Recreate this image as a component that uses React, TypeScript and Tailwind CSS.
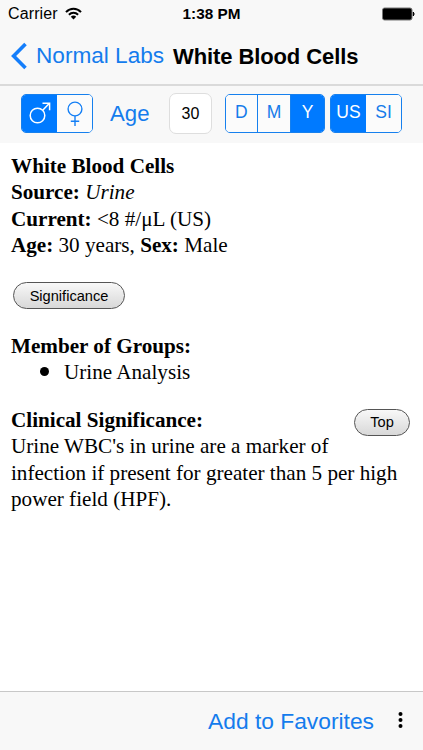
import type { ReactNode } from "react";

function StatusBar() {
  return (
    <div className="flex h-[28px] items-center px-2">
      <div className="flex flex-1 items-center gap-[7px]">
        <span className="text-[16px] leading-[28px] tracking-[0.12px]">Carrier</span>
        <svg className="-mt-px" width="17" height="13" viewBox="0 0 17 13" fill="none" stroke="black" strokeWidth="2">
          <path d="M1 5.1C5.2 .7 11.8 .7 16 5.1" />
          <path d="M3.9 7.8C6.5 5.2 10.5 5.2 13.1 7.8" />
          <path d="M5.8 9.7C7.4 8.2 9.6 8.2 11.2 9.7L8.5 12.4Z" fill="black" stroke="none" />
        </svg>
      </div>
      <span className="text-[15.3px] font-bold leading-[28px]">1:38 PM</span>
      <div className="flex flex-1 justify-end">
        <svg width="34" height="14" viewBox="0 0 34 14">
          <rect x="1.5" y="1" width="29.5" height="12" rx="2" fill="black" stroke="#777" />
          <path d="M32.3 5Q34 7 32.3 9Z" fill="black" stroke="black" />
        </svg>
      </div>
    </div>
  );
}

function Segment({ on = false, width, divider = false, children }: { on?: boolean; width: string; divider?: boolean; children: ReactNode }) {
  return (
    <div className={`flex h-full items-center justify-center ${width} ${on ? "bg-[#007aff] text-white" : "bg-[#fbfbfb] text-[#157bea]"} ${divider ? "border-r border-[#1680ee]" : ""}`}>
      {children}
    </div>
  );
}

function Segments({ className, children }: { className: string; children: ReactNode }) {
  return (
    <div className={`flex h-[39px] shrink-0 overflow-hidden rounded-[5px] border border-[#1680ee] text-[17.5px] leading-none ${className}`}>
      {children}
    </div>
  );
}

function Pill({ className, children }: { className: string; children: ReactNode }) {
  return (
    <button className={`h-[27px] rounded-full border-[1.4px] border-[#555] bg-linear-to-b from-[#f8f8f8] to-[#d8d8d8] font-['Liberation_Sans',sans-serif] text-[14.6px] leading-none ${className}`}>
      {children}
    </button>
  );
}

export default function App() {
  return (
    <div className="flex h-[750px] w-[423px] flex-col overflow-hidden bg-white font-['Liberation_Sans',Arial,sans-serif] text-black">
      <header className="h-[86px] shrink-0 border-b-2 border-[#dadada] bg-[#f8f8f8]">
        <StatusBar />
        <div className="flex h-[56px] items-center whitespace-nowrap pl-[11px]">
          <svg width="17" height="28" viewBox="0 0 17 28" fill="none" stroke="#147efb" strokeWidth="3.6">
            <path d="M14.5 2L2.6 14L14.5 26" />
          </svg>
          <span className="ml-2 w-[137px] text-[22.6px] text-[#147ced]">Normal Labs</span>
          <h1 className="text-[22px] font-bold tracking-[-0.1px]">White Blood Cells</h1>
        </div>
      </header>

      <div className="flex h-[57px] shrink-0 items-center bg-[#f8f8f8] pb-[2px] pl-[21px]">
        <Segments className="w-[72px]">
          <Segment on width="w-[35px]">
            <svg width="22" height="23" viewBox="0 0 22 23" fill="none" stroke="white" strokeWidth="1.5">
              <circle cx="8.5" cy="13.5" r="7.3" />
              <path d="M13.7 8.3L20.2 1.6M13.5 1.2H20.6V8.3" />
            </svg>
          </Segment>
          <Segment width="w-[35px]">
            <svg width="18" height="25" viewBox="0 0 18 25" fill="none" stroke="#147ff5" strokeWidth="1.4">
              <circle cx="9" cy="8" r="6.9" />
              <path d="M9 15V25M4.8 20.3H13.2" />
            </svg>
          </Segment>
        </Segments>
        <span className="ml-[17px] w-[59px] text-[22.2px] text-[#147ced]">Age</span>
        <input aria-label="Age" defaultValue="30" className="h-[41px] w-[43px] rounded-[7px] border border-[#dedede] bg-white text-center text-[16px]" />
        <Segments className="ml-[13px] w-[100px]">
          <Segment width="w-[32px]" divider><span className="-translate-y-px">D</span></Segment>
          <Segment width="w-[34px]" divider><span className="-translate-y-px">M</span></Segment>
          <Segment on width="w-[33px]"><span className="-translate-y-px">Y</span></Segment>
        </Segments>
        <Segments className="ml-[5px] w-[72px]">
          <Segment on width="w-[35px]"><span className="-translate-y-px">US</span></Segment>
          <Segment width="w-[35px]"><span className="-translate-y-px">SI</span></Segment>
        </Segments>
      </div>

      <main className="flex-1 whitespace-nowrap px-[11px] pt-[10px] font-['Liberation_Serif','Times_New_Roman',serif] text-[21.15px] leading-[26.45px]">
        <p className="font-bold">White Blood Cells</p>
        <p><b>Source:</b> <i>Urine</i></p>
        <p><b>Current:</b> &lt;8 #/μL (US)</p>
        <p><b>Age:</b> 30 years, <b>Sex:</b> Male</p>
        <div className="flex h-[74px] items-center pl-[2px]">
          <Pill className="w-[112px]">Significance</Pill>
        </div>
        <h2 className="font-bold">Member of Groups:</h2>
        <ul>
          <li className="flex items-center"><span className="-mt-px mr-[15px] ml-[29px] size-[9px] rounded-full bg-black" />Urine Analysis</li>
        </ul>
        <section className="mt-[21px]">
          <div className="flex h-[26.4px] items-start justify-between">
            <h2 className="font-bold">Clinical Significance:</h2>
            <Pill className="mt-[2px] mr-[2px] w-[56px] shrink-0">Top</Pill>
          </div>
          <p>Urine WBC's in urine are a marker of<br />infection if present for greater than 5 per high<br />power field (HPF).</p>
        </section>
      </main>

      <footer className="flex h-[59px] shrink-0 items-center justify-end border-t border-[#c8c8c8] bg-[#f8f8f8] pr-[20px]">
        <span className="text-[22.8px] text-[#147ced]">Add to Favorites</span>
        <svg className="ml-[24px] -mt-[2px]" width="5" height="18" viewBox="0 0 5 18">
          <circle cx="2.5" cy="3" r="2" />
          <circle cx="2.5" cy="9" r="2" />
          <circle cx="2.5" cy="15" r="2" />
        </svg>
      </footer>
    </div>
  );
}
